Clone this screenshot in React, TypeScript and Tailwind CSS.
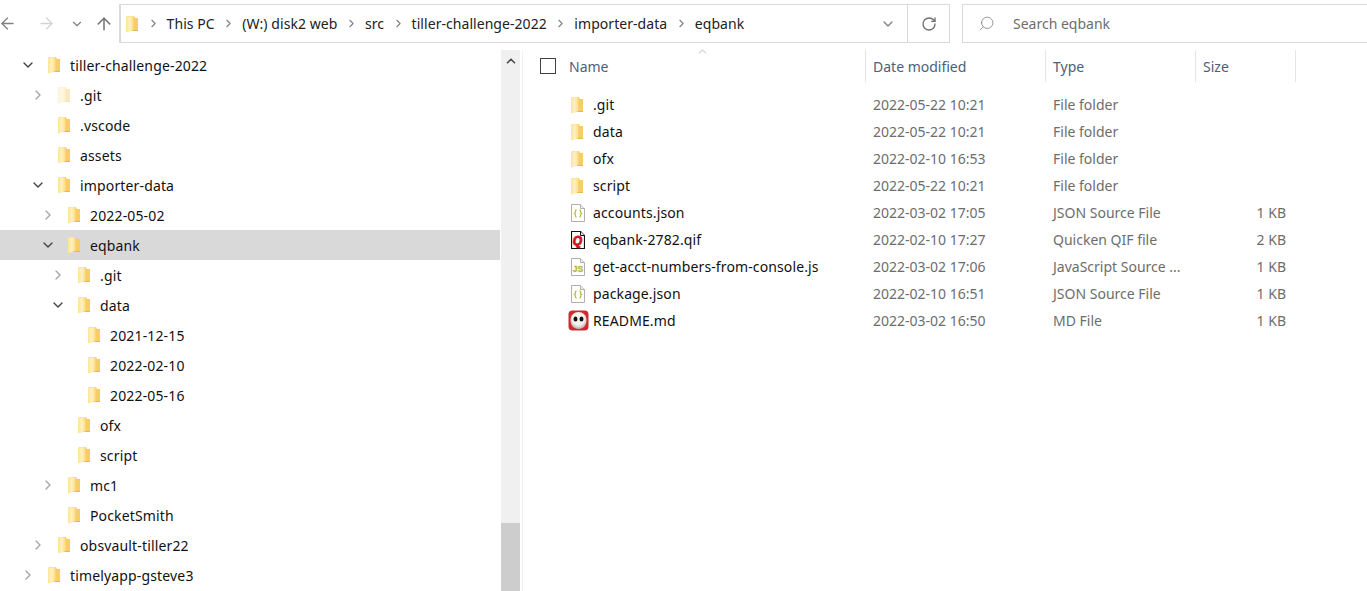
import { ArrowLeft, ArrowRight, ArrowUp, ChevronDown, ChevronRight, ChevronUp, RotateCw, Search } from "lucide-react";
import type { ReactNode } from "react";

const crumbs = ["This PC", "(W:) disk2 web", "src", "tiller-challenge-2022", "importer-data", "eqbank"];

const tree = [
  { name: "tiller-challenge-2022", depth: 0, state: "open" },
  { name: ".git", depth: 1, state: "closed", faded: true },
  { name: ".vscode", depth: 1 },
  { name: "assets", depth: 1 },
  { name: "importer-data", depth: 1, state: "open" },
  { name: "2022-05-02", depth: 2, state: "closed" },
  { name: "eqbank", depth: 2, state: "open", selected: true },
  { name: ".git", depth: 3, state: "closed" },
  { name: "data", depth: 3, state: "open" },
  { name: "2021-12-15", depth: 4 },
  { name: "2022-02-10", depth: 4 },
  { name: "2022-05-16", depth: 4 },
  { name: "ofx", depth: 3 },
  { name: "script", depth: 3 },
  { name: "mc1", depth: 2, state: "closed" },
  { name: "PocketSmith", depth: 2 },
  { name: "obsvault-tiller22", depth: 1, state: "closed" },
  { name: "timelyapp-gsteve3", depth: 0, state: "closed" },
];

const files = [
  { name: ".git", date: "2022-05-22 10:21", type: "File folder", size: "", icon: "folder" },
  { name: "data", date: "2022-05-22 10:21", type: "File folder", size: "", icon: "folder" },
  { name: "ofx", date: "2022-02-10 16:53", type: "File folder", size: "", icon: "folder" },
  { name: "script", date: "2022-05-22 10:21", type: "File folder", size: "", icon: "folder" },
  { name: "accounts.json", date: "2022-03-02 17:05", type: "JSON Source File", size: "1 KB", icon: "json" },
  { name: "eqbank-2782.qif", date: "2022-02-10 17:27", type: "Quicken QIF file", size: "2 KB", icon: "qif" },
  { name: "get-acct-numbers-from-console.js", date: "2022-03-02 17:06", type: "JavaScript Source ...", size: "1 KB", icon: "js" },
  { name: "package.json", date: "2022-02-10 16:51", type: "JSON Source File", size: "1 KB", icon: "json" },
  { name: "README.md", date: "2022-03-02 16:50", type: "MD File", size: "1 KB", icon: "md" },
];

function Folder({ faded }: { faded?: boolean }) {
  return (
    <svg width="14" height="18" viewBox="0 0 14 18" className={faded ? "shrink-0 opacity-40" : "shrink-0"}>
      <defs>
        <linearGradient id="leaf" x1="0" x2="1" y1="0" y2="0">
          <stop offset="0" stopColor="#fbe596" />
          <stop offset="0.5" stopColor="#fff1c0" />
          <stop offset="1" stopColor="#fbdc82" />
        </linearGradient>
      </defs>
      <path d="M2 1h7l1 2h3v12H2z" fill="#f6cd66" />
      <path d="M1 1.500l7.500-.5v14L1 17.500z" fill="url(#leaf)" />
      <path d="M1 17.500l7.500-2.500H13v1H6z" fill="#e6b94f" />
    </svg>
  );
}

function PageIcon({ children, dark }: { children?: ReactNode; dark?: boolean }) {
  const line = dark ? "#111" : "#b0b0b0";
  return (
    <svg width="14" height="18" viewBox="0 0 14 18" className="shrink-0">
      <path d="M.5.5h9l4 4v13H.5z" fill="#fff" stroke={line} strokeWidth={dark ? 1.2 : 1} />
      <path d="M9.500.5v4h4" fill="#eee" stroke={line} />
      {children}
    </svg>
  );
}

function FileIcon({ kind }: { kind: string }) {
  if (kind === "folder")
    return (
      <span className="-ml-[1px] mr-[1px]">
        <Folder />
      </span>
    );
  if (kind === "json")
    return (
      <PageIcon>
        <path
          d="M5.500 6c-1.800 0-.7 3-1.800 3.500 1.100.5 0 3.500 1.800 3.500M8.500 6c1.800 0 .7 3 1.800 3.500-1.100.5 0 3.500-1.800 3.500"
          fill="none"
          stroke="#b4bb45"
          strokeWidth="1.300"
        />
      </PageIcon>
    );
  if (kind === "js")
    return (
      <PageIcon>
        <text x="7" y="14" textAnchor="middle" fontSize="8.500" fontWeight="700" fill="#b4b53c" stroke="#b4b53c" strokeWidth="0.300" fontFamily="Liberation Sans">
          JS
        </text>
      </PageIcon>
    );
  if (kind === "qif")
    return (
      <PageIcon dark>
        <text x="6.500" y="14" textAnchor="middle" fontSize="12" fontWeight="700" fontStyle="italic" fill="#d3121f" stroke="#d3121f" strokeWidth="0.900" fontFamily="Liberation Sans">
          Q
        </text>
      </PageIcon>
    );
  return (
    <svg width="21" height="21" viewBox="0 0 21 21" className="-ml-[3px] -mr-[4px] shrink-0">
      <defs>
        <radialGradient id="face" cx="0.5" cy="0.4" r="0.6">
          <stop offset="0.6" stopColor="#f6f3ee" />
          <stop offset="1" stopColor="#b9aeb0" />
        </radialGradient>
      </defs>
      <rect x="0.500" y="0.500" width="20" height="20" rx="4" fill="#cf2a2e" />
      <path d="M2.500 10c0-5 3.500-8 8-8s8 3 8 8c0 5.500-3 9-8 9s-8-3.500-8-9z" fill="url(#face)" />
      <ellipse cx="7.500" cy="9" rx="2" ry="2.600" fill="#111" />
      <ellipse cx="13.500" cy="9" rx="2" ry="2.600" fill="#111" />
    </svg>
  );
}

function TreeRow({ row }: { row: (typeof tree)[number] }) {
  return (
    <div
      className={`mr-[1px] flex h-[30px] shrink-0 items-center ${row.selected ? "bg-[#d9d9d9]" : ""}`}
      style={{ paddingLeft: 20 + row.depth * 10 }}
    >
      <span className="flex w-[16px] shrink-0 justify-center">
        {row.state === "open" && <ChevronDown size={16} strokeWidth={2} className="text-[#404040]" />}
        {row.state === "closed" && <ChevronRight size={16} strokeWidth={2} className="text-[#a6a6a6]" />}
      </span>
      <span className="ml-[11px]">
        <Folder faded={row.faded} />
      </span>
      <span className="ml-[9px] text-[14px] tracking-[0.15px] text-[#111]">{row.name}</span>
    </div>
  );
}

export default function App() {
  return (
    <div className="flex h-[591px] w-[1367px] flex-col overflow-hidden bg-white font-['Noto_Sans','Open_Sans',sans-serif] text-[14px]">
      {/* toolbar */}
      <div className="flex h-[50px] shrink-0 items-start">
        <div className="flex h-[47px] w-[119px] shrink-0 items-center -ml-[2px]">
          <ArrowLeft size={19} strokeWidth={1.600} className="text-[#808080]" />
          <ArrowRight size={19} strokeWidth={1.600} className="ml-[20px] text-[#d4d4d4]" />
          <ChevronDown size={14} strokeWidth={2} className="ml-[14px] text-[#808080]" />
          <ArrowUp size={20} strokeWidth={1.800} className="ml-[10px] text-[#707070]" />
        </div>
        <div className="ml-[2px] mt-[4px] flex h-[39px] w-[831px] shrink-0 items-center border-y border-l-2 border-r border-[#d9d9d9]">
          <span className="ml-[4px]">
            <Folder />
          </span>
          <div className="flex flex-1 items-center">
            {crumbs.map((c) => (
              <span key={c} className="flex items-center">
                <ChevronRight size={13} strokeWidth={2} className="ml-[7.6px] mr-[7px] text-[#808080]" />
                <span className="tracking-[0.05px] text-[#222]">{c}</span>
              </span>
            ))}
          </div>
          <span className="flex h-full w-[38px] items-center justify-center">
            <ChevronDown size={16} strokeWidth={2} className="text-[#808080]" />
          </span>
          <span className="flex h-full w-[42px] items-center justify-center border-l border-[#d9d9d9]">
            <RotateCw size={16} strokeWidth={2} className="text-[#707070]" />
          </span>
        </div>
        <div className="ml-[12px] mt-[4px] flex h-[39px] flex-1 items-center border border-r-0 border-[#d9d9d9] pl-[15px]">
          <Search size={17} strokeWidth={1} className="-scale-x-100 text-[#707070]" />
          <span className="ml-[18px] text-[#6d6d6d]">Search eqbank</span>
        </div>
      </div>

      <div className="flex min-h-0 flex-1">
        {/* nav tree */}
        <div className="flex w-[501px] shrink-0 flex-col overflow-hidden">
          {tree.map((row, i) => (
            <TreeRow key={i} row={row} />
          ))}
        </div>
        <div className="flex w-[19px] shrink-0 flex-col bg-[#f0f0f0]">
          <div className="flex h-[22px] items-center justify-center">
            <ChevronUp size={14} strokeWidth={3} className="text-[#505050]" />
          </div>
          <div className="mt-auto h-[68px] bg-[#cdcdcd]" />
        </div>
        <div className="w-[3px] shrink-0 border-r border-[#f2f2f2]" />

        {/* file list */}
        <div className="min-w-0 flex-1">
          <div className="relative flex h-[32px] text-[#4c607a]">
            <ChevronUp size={13} strokeWidth={1} className="absolute left-[173px] top-[-5px] text-[#808080]" />
            <div className="flex w-[343px] items-center border-r border-[#e5e5e5] pl-[17px]">
              <span className="h-[16px] w-[16px] border border-[#404040]" />
              <span className="ml-[13px]">Name</span>
            </div>
            <div className="flex w-[180px] items-center border-r border-[#e5e5e5] pl-[7px]">Date modified</div>
            <div className="flex w-[150px] items-center border-r border-[#e5e5e5] pl-[7px]">Type</div>
            <div className="flex w-[100px] items-center border-r border-[#e5e5e5] pl-[7px]">Size</div>
          </div>
          <div className="pt-[9px]">
            {files.map((f) => (
              <div key={f.name} className="flex h-[27px] items-center">
                <div className="flex w-[343px] items-center pl-[48px]">
                  <FileIcon kind={f.icon} />
                  <span className="ml-[8px] tracking-[0.12px] text-[#111]">{f.name}</span>
                </div>
                <div className="w-[180px] pl-[7px] text-[#6d6d6d]">{f.date}</div>
                <div className="w-[150px] pl-[7px] text-[#6d6d6d]">{f.type}</div>
                <div className="w-[90px] text-right text-[#6d6d6d]">{f.size}</div>
              </div>
            ))}
          </div>
        </div>
      </div>
    </div>
  );
}
